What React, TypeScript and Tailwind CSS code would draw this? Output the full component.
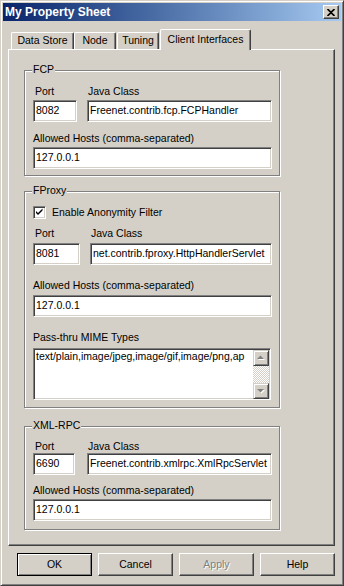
import type { ReactNode } from "react";

// Win2000 bevels
const raised =
  "border border-t-white border-l-white border-r-[#404040] border-b-[#404040] shadow-[inset_-1px_-1px_0_#808080]";
const sunken =
  "border border-t-[#808080] border-l-[#808080] border-r-white border-b-white shadow-[inset_1px_1px_0_#404040,inset_-1px_-1px_0_#d4d0c8]";

function Field({ value, className = "" }: { value: string; className?: string }) {
  return (
    <div className={`${sunken} h-[22px] bg-white pl-[2px] pt-[3px] leading-[13px] whitespace-nowrap overflow-hidden ${className}`}>
      {value}
    </div>
  );
}

function Label({ children, className = "" }: { children: ReactNode; className?: string }) {
  return <div className={`h-[13px] leading-[13px] whitespace-nowrap ${className}`}>{children}</div>;
}

function Group({ title, children, className = "" }: { title: string; children: ReactNode; className?: string }) {
  return (
    <div className={`relative w-[256px] border border-[#808080] shadow-[1px_1px_0_#fff,inset_1px_1px_0_#fff] ${className}`}>
      <span className="absolute -top-[8px] left-[7px] bg-[#d4d0c8] px-[1px] leading-[13px]">{title}</span>
      {children}
    </div>
  );
}

function Arrow({ up }: { up?: boolean }) {
  const d = up ? "M4 9 L7.5 5.5 L11 9 Z" : "M4 6 L7.5 9.5 L11 6 Z";
  return (
    <div className="h-[16px] w-[16px] border border-t-[#d4d0c8] border-l-[#d4d0c8] border-r-[#404040] border-b-[#404040] bg-[#d4d0c8] shadow-[inset_1px_1px_0_#fff,inset_-1px_-1px_0_#808080]">
      <svg width="14" height="14" viewBox="0 0 14 14" className="-ml-px -mt-px">
        <path d={d} fill="#fff" transform="translate(1 1)" />
        <path d={d} fill="#808080" />
      </svg>
    </div>
  );
}

function Button({ children, primary, disabled }: { children: ReactNode; primary?: boolean; disabled?: boolean }) {
  const frame = primary
    ? "border border-black shadow-[inset_1px_1px_0_#fff,inset_-1px_-1px_0_#808080]"
    : raised;
  return (
    <div className={`${frame} flex h-[23px] w-[75px] items-center justify-center ${disabled ? "text-[#808080] [text-shadow:1px_1px_0_#fff]" : ""}`}>
      {children}
    </div>
  );
}

const tabs = [
  { label: "Data Store", cls: "ml-[3px] w-[63px]" },
  { label: "Node", cls: "w-[42px]" },
  { label: "Tuning", cls: "ml-px w-[42px]" },
];

export default function App() {
  return (
    <div className="flex h-[586px] w-[344px] flex-col border border-t-[#d4d0c8] border-l-[#d4d0c8] border-r-[#404040] border-b-[#404040] bg-[#d4d0c8] p-[2px] font-['Liberation_Sans',Arial,sans-serif] text-[10.5px] text-black shadow-[inset_1px_1px_0_#fff,inset_-1px_-1px_0_#808080]">
      {/* Title bar */}
      <div className="flex h-[18px] shrink-0 items-center bg-linear-to-r from-[#0a246a] to-[#a6caf0] pl-[2px] pr-[2px]">
        <span className="flex-1 text-[12px] font-bold text-white">My Property Sheet</span>
        <div className={`${raised} flex h-[14px] w-[16px] items-center justify-center bg-[#d4d0c8]`}>
          <svg width="8" height="7" viewBox="0 0 8 7">
            <path d="M0.5 0 L4 3.3 L7.5 0 M0.5 7 L4 3.7 L7.5 7" stroke="#000" strokeWidth="1.6" fill="none" />
          </svg>
        </div>
      </div>

      <div className="flex flex-1 flex-col pl-[5px] pr-[6px]">
        {/* Tabs */}
        <div className="relative z-10 mt-[8px] flex h-[20px] items-end">
          {tabs.map((t) => (
            <div
              key={t.label}
              className={`${t.cls} flex h-[17px] items-center justify-center rounded-t-[2px] border border-b-0 border-t-white border-l-white border-r-[#404040] shadow-[inset_-1px_0_0_#808080]`}
            >
              {t.label}
            </div>
          ))}
          <div className="-mb-px ml-px flex h-[21px] w-[91px] items-center justify-center rounded-t-[2px] border border-b-0 border-t-white border-l-white border-r-[#404040] bg-[#d4d0c8] pb-[1px] shadow-[inset_-1px_0_0_#808080]">
            Client Interfaces
          </div>
        </div>

        {/* Tab panel */}
        <div className={`${raised} h-[497px] pl-[15px] pt-[20px]`}>
          <Group title="FCP">
            <div className="pt-[14px] pl-[8px] pr-[7px] pb-[6px]">
              <div className="flex gap-[10px]">
                <div className="w-[44px]">
                  <Label className="pl-[2px]">Port</Label>
                  <Field className="mt-[2px]" value="8082" />
                </div>
                <div className="flex-1">
                  <Label className="pl-px">Java Class</Label>
                  <Field className="mt-[2px]" value="Freenet.contrib.fcp.FCPHandler" />
                </div>
              </div>
              <Label className="mt-[10px]">Allowed Hosts (comma-separated)</Label>
              <Field className="mt-[2px]" value="127.0.0.1" />
            </div>
          </Group>

          <Group title="FProxy" className="mt-[15px]">
            <div className="pt-[14px] pl-[8px] pr-[7px] pb-[7px]">
              <div className="flex h-[13px] items-center">
                <div className={`${sunken} relative h-[13px] w-[13px] bg-white`}>
                  <svg width="13" height="13" viewBox="0 0 13 13" className="absolute -left-px -top-px">
                    <path d="M3 5 L5 7 L9.5 2.5 L9.5 4.5 L5 9 L3 7 Z" fill="#000" />
                  </svg>
                </div>
                <span className="ml-[6px] leading-[13px]">Enable Anonymity Filter</span>
              </div>
              <div className="mt-[8px] flex gap-[10px]">
                <div className="w-[47px]">
                  <Label className="pl-[2px]">Port</Label>
                  <Field className="mt-[3px]" value="8081" />
                </div>
                <div className="flex-1">
                  <Label className="pl-px">Java Class</Label>
                  <Field className="mt-[3px]" value="net.contrib.fproxy.HttpHandlerServlet" />
                </div>
              </div>
              <Label className="mt-[14px]">Allowed Hosts (comma-separated)</Label>
              <Field className="mt-[3px]" value="127.0.0.1" />
              <Label className="mt-[14px]">Pass-thru MIME Types</Label>
              <div className={`${sunken} mt-[4px] flex h-[52px] w-[238px] bg-white`}>
                <div className="flex-1 overflow-hidden whitespace-nowrap pl-[2px] pt-px leading-[13px]">
                  text/plain,image/jpeg,image/gif,image/png,ap
                </div>
                <div className="mt-px mr-px flex w-[16px] flex-col">
                  <Arrow up />
                  <div className="flex-1 bg-[image:repeating-conic-gradient(#fff_0_25%,#d4d0c8_0_50%)] bg-[length:2px_2px]" />
                  <Arrow />
                </div>
              </div>
            </div>
          </Group>

          <Group title="XML-RPC" className="mt-[18px]">
            <div className="pt-[13px] pl-[8px] pr-[7px] pb-[8px]">
              <div className="flex gap-[12px]">
                <div className="w-[42px]">
                  <Label className="pl-[2px]">Port</Label>
                  <Field value="6690" />
                </div>
                <div className="flex-1">
                  <Label className="pl-px">Java Class</Label>
                  <Field value="Freenet.contrib.xmlrpc.XmlRpcServlet" />
                </div>
              </div>
              <Label className="mt-[9px]">Allowed Hosts (comma-separated)</Label>
              <Field className="mt-[2px]" value="127.0.0.1" />
            </div>
          </Group>
        </div>

        {/* Dialog buttons */}
        <div className="mt-[7px] flex justify-end gap-[6px]">
          <Button primary>OK</Button>
          <Button>Cancel</Button>
          <Button disabled>Apply</Button>
          <Button>Help</Button>
        </div>
      </div>
    </div>
  );
}
